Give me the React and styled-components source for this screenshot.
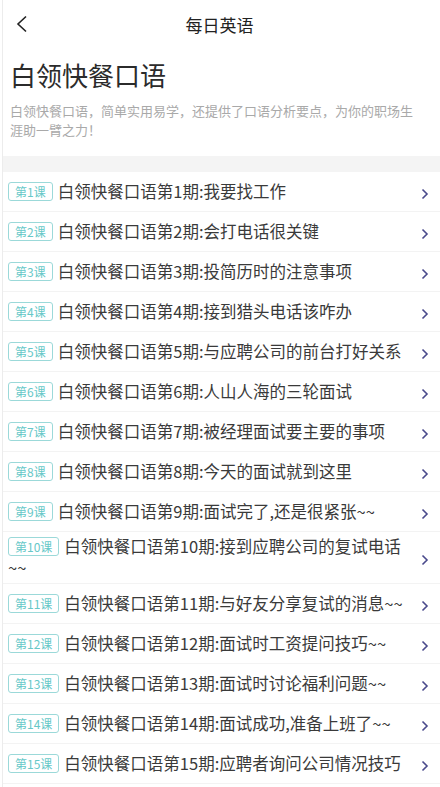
import React from "react";
import styled, { createGlobalStyle } from "styled-components";

const Global = createGlobalStyle`
  html, body { margin: 0; padding: 0; background: #fff; }
  body { font-family: "Noto Sans CJK SC", "Noto Sans", sans-serif; -webkit-font-smoothing: antialiased; }
  * { box-sizing: border-box; }
`;

const Page = styled.div`
  width: 438px;
  height: 787px;
  overflow: hidden;
  background: #fff;
  border-left: 1px solid #ececec;
  margin-left: 2px;
`;

const NavBar = styled.header`
  height: 48px;
  display: grid;
  grid-template-columns: 48px 1fr 48px;
  align-items: center;
`;

const Back = styled.button`
  border: 0;
  background: none;
  padding: 0 0 0 12px;
  display: flex;
  align-items: center;
  height: 48px;
  cursor: pointer;
`;

const NavTitle = styled.h1`
  margin: 0;
  text-align: center;
  font-size: 17px;
  font-weight: 400;
  color: #222;
  margin-left: -4px;
`;

const Intro = styled.section`
  padding: 10px 19px 17px 7px;
`;

const Title = styled.h2`
  margin: 0;
  font-size: 26px;
  line-height: 34px;
  font-weight: 400;
  color: #2b2b2b;
`;

const Desc = styled.p`
  margin: 9px 0 0;
  font-size: 13px;
  line-height: 19px;
  color: #a9a9a9;
`;

const Band = styled.div`
  height: 16px;
  background: #f4f4f4;
`;

const List = styled.ul`
  list-style: none;
  margin: 0;
  padding: 0;
`;

const Row = styled.li`
  display: flex;
  align-items: center;
  min-height: 40px;
  padding: 4px 0 5px 5px;
  border-bottom: 1px solid #f3f3f3;
`;

const Text = styled.div`
  flex: 1;
  font-size: 16.5px;
  line-height: 21px;
  color: #3a3a3a;
`;

const Badge = styled.span`
  display: inline-block;
  font-size: 12px;
  line-height: 17px;
  height: 19px;
  padding: 0 6px;
  color: #66c8c8;
  border: 1px solid #9bd9d9;
  border-radius: 3px;
  margin-right: 5px;
  vertical-align: 1px;
`;

const Chevron = styled.span`
  width: 26px;
  display: flex;
  justify-content: flex-start;
  align-items: center;
  padding-left: 7px;
  margin-top: 5px;
  flex-shrink: 0;
`;

const lessons = [
  "我要找工作",
  "会打电话很关键",
  "投简历时的注意事项",
  "接到猎头电话该咋办",
  "与应聘公司的前台打好关系",
  "人山人海的三轮面试",
  "被经理面试要主要的事项",
  "今天的面试就到这里",
  "面试完了,还是很紧张~~",
  "接到应聘公司的复试电话~~",
  "与好友分享复试的消息~~",
  "面试时工资提问技巧~~",
  "面试时讨论福利问题~~",
  "面试成功,准备上班了~~",
  "应聘者询问公司情况技巧",
];

export default function App() {
  return (
    <>
      <Global />
      <Page>
        <NavBar>
          <Back aria-label="back">
            <svg width="14" height="18" viewBox="0 0 14 18">
              <path d="M11 1.5 L3 9 L11 16.5" fill="none" stroke="#222" strokeWidth="1.6" />
            </svg>
          </Back>
          <NavTitle>每日英语</NavTitle>
          <span />
        </NavBar>
        <Intro>
          <Title>白领快餐口语</Title>
          <Desc>白领快餐口语，简单实用易学，还提供了口语分析要点，为你的职场生涯助一臂之力！</Desc>
        </Intro>
        <Band />
        <List>
          {lessons.map((t, i) => (
            <Row key={i}>
              <Text>
                <Badge>第{i + 1}课</Badge>
                白领快餐口语第{i + 1}期:{t}
              </Text>
              <Chevron>
                <svg width="8" height="12" viewBox="0 0 8 12">
                  <path d="M1.5 1.5 L6 6 L1.5 10.5" fill="none" stroke="#4a4a8c" strokeWidth="1.6" />
                </svg>
              </Chevron>
            </Row>
          ))}
        </List>
      </Page>
    </>
  );
}
